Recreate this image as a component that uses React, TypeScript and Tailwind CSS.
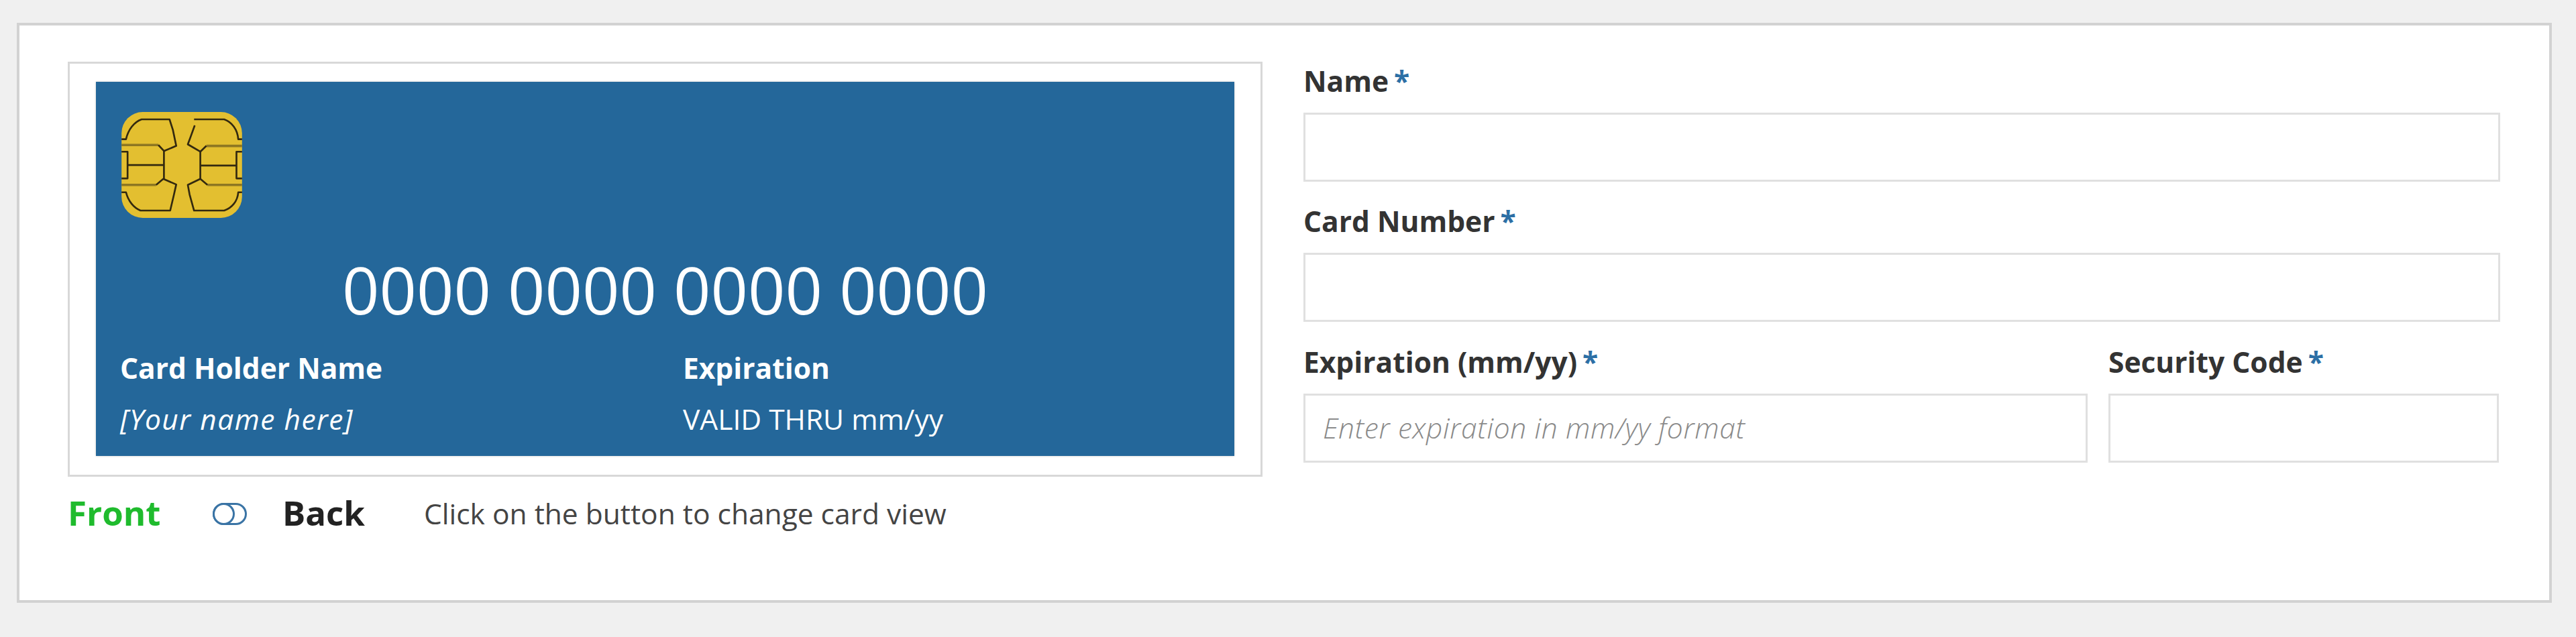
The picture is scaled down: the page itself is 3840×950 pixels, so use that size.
const sans = "font-['Open_Sans',sans-serif]";

function Chip() {
  return (
    <svg viewBox="185 110 540 475" className="block w-[180px] h-[158px] ml-[2px]" fill="none">
      <rect x="185" y="110" width="540" height="475" rx="95" fill="#e3bf30" />
      <g stroke="#8d7722" strokeWidth="11">
        <path d="M185 258H350" />
        <path d="M565 262H725" />
        <path d="M185 437H340" />
        <path d="M570 437H725" />
      </g>
      <g stroke="#33290f" strokeWidth="8" strokeLinejoin="round">
        <path d="M185 232H205C215 190 240 155 275 143H400L415 190L430 262L375 285L350 258" />
        <path d="M375 285V410" />
        <path d="M185 288H212V408H185" />
        <path d="M212 348H375" />
        <path d="M340 437L372 410L430 435L420 480L403 552H270C240 540 215 510 205 470H185" />
        <path d="M510 143H645C680 155 705 190 708 232H725" />
        <path d="M513 170L495 220L482 255L538 288L565 262" />
        <path d="M538 288V410" />
        <path d="M725 288H700V408H725" />
        <path d="M538 350H700" />
        <path d="M570 437L538 410L482 437L490 480L510 552H645C680 540 705 510 708 470H725" />
      </g>
    </svg>
  );
}

function Toggle() {
  return (
    <svg viewBox="0 0 51 33" className="block w-[51px] h-[33px]" fill="none" stroke="#3a74a5" strokeWidth="3">
      <rect x="1.5" y="1.5" width="48" height="30" rx="15" />
      <circle cx="16.5" cy="16.5" r="15" fill="#fff" />
    </svg>
  );
}

function Label({ text }: { text: string }) {
  return (
    <div className="h-[76px] pt-[1px] leading-[55px] text-[42.5px] font-bold text-[#333333] whitespace-nowrap">
      {text}
      <span className="ml-[8px] text-[#2c6fa5]">*</span>
    </div>
  );
}

const inputClass =
  "block h-[103px] w-full border-[3px] border-[#e0e0e0] bg-white px-[26px] pb-[2px] text-[42.5px] tracking-[0.65px] italic font-light outline-none placeholder:text-[#8a8a8a]";

export default function App() {
  return (
    <div className={`${sans} w-[3840px] h-[950px] bg-[#f0f0f0] pt-[34px] pl-[25px]`}>
      <div className="w-[3779px] h-[865px] border-[4px] border-[#d2d2d2] bg-white flex pl-[72px] pt-[54px]">
        <div className="w-[1781px] shrink-0">
          <div className="h-[619px] border-[3px] border-[#d8d8d8] pt-[27px] pl-[39px]">
            <div className="w-[1697px] h-[558px] bg-[#24679a] text-white pl-[36px] pt-[45px] shadow-[0_0_3px_#c8c8c8]">
              <Chip />
              <div className="pr-[36px] mt-[38px] text-center text-[97px] leading-[136px]">0000 0000 0000 0000</div>
              <div className="flex mt-[22px] text-[42.5px] leading-[55px] font-bold">
                <div className="w-[839px]">Card Holder Name</div>
                <div>Expiration</div>
              </div>
              <div className="flex mt-[21px] text-[42.5px] leading-[55px]">
                <div className="w-[839px] italic tracking-[1.5px]">[Your name here]</div>
                <div>VALID THRU mm/yy</div>
              </div>
            </div>
          </div>
          <div className="flex items-center mt-[22px] h-[66px]">
            <span className="-mt-[3px] text-[51px] font-bold text-[#1fbb2d] w-[216px]">Front</span>
            <Toggle />
            <span className="-mt-[3px] ml-[53px] text-[51px] font-bold text-[#222222] w-[211px]">Back</span>
            <span className="text-[42.5px] text-[#444444]">Click on the button to change card view</span>
          </div>
        </div>
        <div className="ml-[61px] w-[1784px]">
          <Label text="Name" />
          <input className={inputClass} />
          <div className="mt-[30px]"><Label text="Card Number" /></div>
          <input className={inputClass} />
          <div className="mt-[31px] flex">
            <div className="w-[1169px]">
              <Label text="Expiration (mm/yy)" />
              <input className={inputClass} placeholder="Enter expiration in mm/yy format" />
            </div>
            <div className="ml-[31px] w-[582px]">
              <Label text="Security Code" />
              <input className={inputClass} />
            </div>
          </div>
        </div>
      </div>
    </div>
  );
}
